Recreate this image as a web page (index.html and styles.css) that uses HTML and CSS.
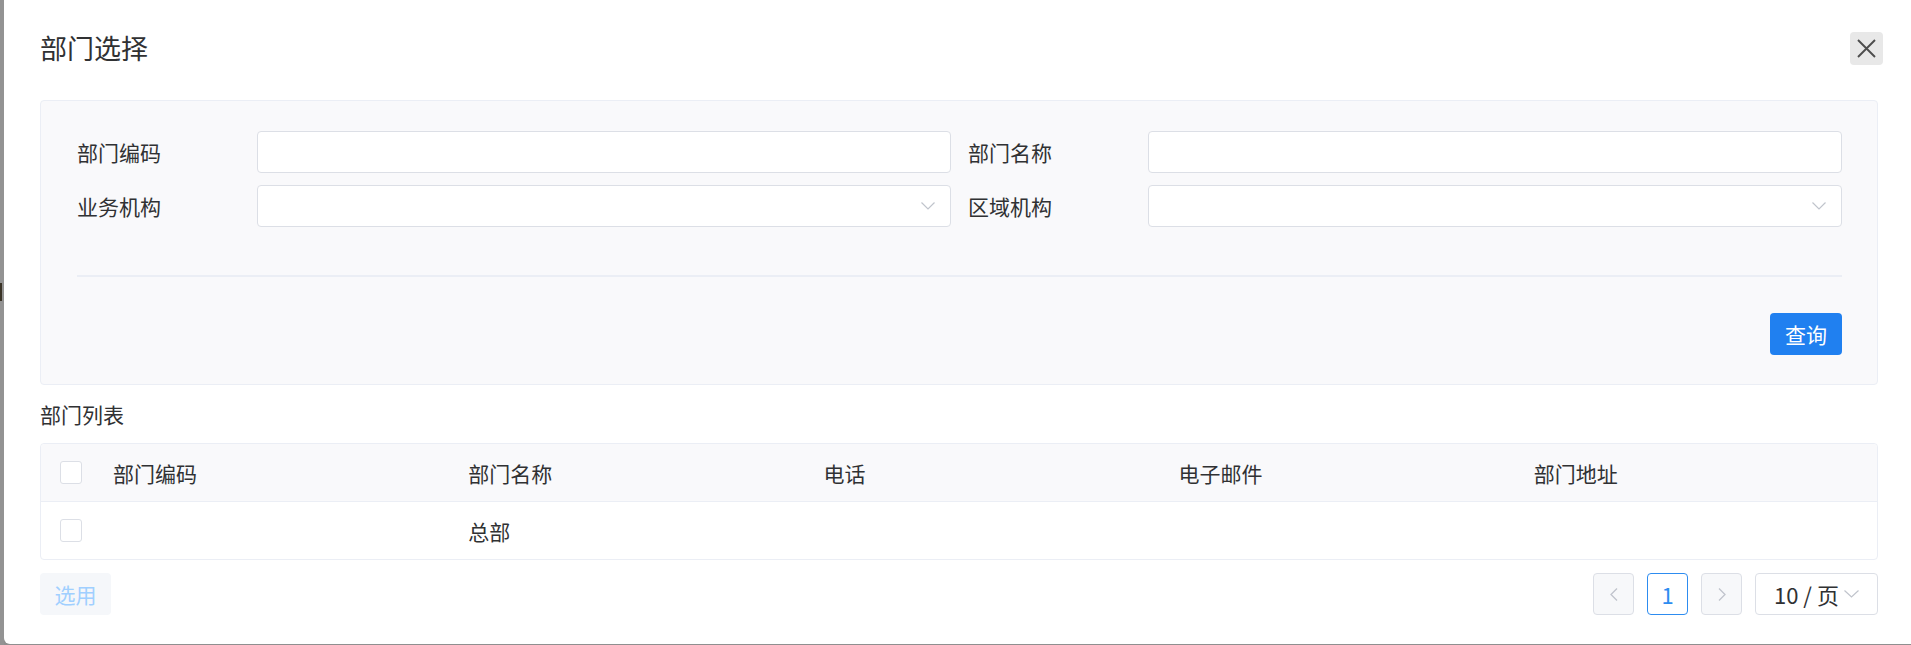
FILE: index.html
```html
<!DOCTYPE html>
<html lang="zh-CN">
<head>
<meta charset="utf-8">
<title>部门选择</title>
<link rel="stylesheet" href="styles.css">
</head>
<body>
<div class="backdrop"><span class="backdrop-mark"></span></div>
<div class="dialog">
  <div class="dialog-header">
    <div class="dialog-title">部门选择</div>
    <button class="close-btn" aria-label="关闭">
      <svg width="19" height="19" viewBox="0 0 19 19"><path d="M1 1L18 18M18 1L1 18" stroke="#4d4d4d" stroke-width="1.9" fill="none"/></svg>
    </button>
  </div>
  <div class="dialog-body">
    <div class="search-panel">
      <div class="form-grid">
        <div class="form-item"><label class="form-label">部门编码</label><div class="input"></div></div>
        <div class="form-item"><label class="form-label">部门名称</label><div class="input"></div></div>
        <div class="form-item"><label class="form-label">业务机构</label><div class="input select"><svg class="chev" width="14" height="8" viewBox="0 0 14 8"><path d="M0.5 0.5L7 7L13.5 0.5" stroke="#c0c4cc" stroke-width="1.2" fill="none"/></svg></div></div>
        <div class="form-item"><label class="form-label">区域机构</label><div class="input select"><svg class="chev" width="14" height="8" viewBox="0 0 14 8"><path d="M0.5 0.5L7 7L13.5 0.5" stroke="#c0c4cc" stroke-width="1.2" fill="none"/></svg></div></div>
      </div>
      <div class="divider"></div>
      <div class="panel-actions"><button class="btn-primary">查询</button></div>
    </div>
    <div class="section-title">部门列表</div>
    <div class="table">
      <div class="tr thead">
        <div class="td check-cell"><span class="checkbox"></span></div>
        <div class="td">部门编码</div>
        <div class="td">部门名称</div>
        <div class="td">电话</div>
        <div class="td">电子邮件</div>
        <div class="td">部门地址</div>
      </div>
      <div class="tr">
        <div class="td check-cell"><span class="checkbox"></span></div>
        <div class="td"></div>
        <div class="td">总部</div>
        <div class="td"></div>
        <div class="td"></div>
        <div class="td"></div>
      </div>
    </div>
    <div class="footer">
      <button class="btn-disabled">选用</button>
      <div class="pager">
        <button class="pg-btn pg-nav"><svg width="8" height="13" viewBox="0 0 8 13"><path d="M7 0.5L1 6.5L7 12.5" stroke="#c0c4cc" stroke-width="1.3" fill="none"/></svg></button>
        <button class="pg-btn pg-active">1</button>
        <button class="pg-btn pg-nav"><svg width="8" height="13" viewBox="0 0 8 13"><path d="M1 0.5L7 6.5L1 12.5" stroke="#c0c4cc" stroke-width="1.3" fill="none"/></svg></button>
        <div class="pg-size"><span>10 / 页</span><svg width="15" height="8" viewBox="0 0 15 8"><path d="M0.5 0.5L7.5 7L14.5 0.5" stroke="#c0c4cc" stroke-width="1.2" fill="none"/></svg></div>
      </div>
    </div>
  </div>
</div>
</body>
</html>
```

FILE: styles.css
```css
* { box-sizing: border-box; }
html, body { margin: 0; padding: 0; }
body {
  display: flex;
  width: 1911px;
  height: 645px;
  overflow: hidden;
  background: #8f8f8f;
  font-family: "Noto Sans CJK SC", "Noto Sans", sans-serif;
  color: #303133;
}
button { font-family: inherit; }
.backdrop {
  width: 4px;
  flex: none;
  background: #939393;
  padding-top: 283px;
}
.backdrop-mark {
  display: block;
  width: 2px;
  height: 18px;
  background: #3a3326;
}
.dialog {
  flex: 1;
  height: 644px;
  background: #fff;
  border-bottom-left-radius: 6px;
}
.dialog-header {
  height: 100px;
  display: flex;
  justify-content: space-between;
  align-items: flex-start;
  padding: 31px 28px 0 36px;
}
.dialog-title {
  font-size: 27px;
  line-height: 33px;
  color: #303133;
}
.close-btn {
  width: 33px;
  height: 33px;
  margin-top: 1px;
  border: none;
  border-radius: 4px;
  background: #e8e8e8;
  padding: 0;
  display: flex;
  align-items: center;
  justify-content: center;
}
.dialog-body {
  padding: 0 33px 0 36px;
}
.search-panel {
  height: 285px;
  background: #f9f9fb;
  border: 1px solid #ebeef5;
  border-radius: 4px;
  padding: 30px 35px 0 36px;
}
.form-grid {
  display: grid;
  grid-template-columns: 1fr 1fr;
  column-gap: 17px;
  row-gap: 12px;
}
.form-item {
  display: flex;
  align-items: center;
}
.form-label {
  width: 180px;
  flex: none;
  font-size: 21px;
  color: #303133;
}
.input {
  flex: 1;
  height: 42px;
  background: #fff;
  border: 1px solid #dcdfe6;
  border-radius: 4px;
}
.select {
  display: flex;
  align-items: center;
  justify-content: flex-end;
  padding-right: 15px;
}
.divider {
  height: 2px;
  background: #ebeef5;
  margin-top: 48px;
}
.panel-actions {
  display: flex;
  justify-content: flex-end;
  margin-top: 36px;
}
.btn-primary {
  width: 72px;
  height: 42px;
  border: none;
  border-radius: 4px;
  background: #2080f0;
  color: #fff;
  font-size: 21px;
  padding: 0;
}
.section-title {
  height: 58px;
  display: flex;
  align-items: center;
  padding-bottom: 1px;
  font-size: 21px;
  color: #303133;
}
.table {
  border: 1px solid #ebeef5;
  border-radius: 4px;
}
.tr {
  display: grid;
  grid-template-columns: 60px repeat(5, 1fr);
  height: 58px;
  align-items: center;
  font-size: 21px;
  color: #303133;
}
.thead {
  background: #f9f9fb;
  border-bottom: 1px solid #ebeef5;
  border-radius: 4px 4px 0 0;
}
.tr + .tr { height: 57px; }
.td {
  padding-left: 12px;
}
.check-cell {
  padding-left: 0;
  display: flex;
  justify-content: center;
}
.checkbox {
  display: block;
  width: 22px;
  height: 23px;
  background: #fff;
  border: 1px solid #dcdfe6;
  border-radius: 3px;
}
.footer {
  display: flex;
  justify-content: space-between;
  align-items: center;
  margin-top: 13px;
}
.btn-disabled {
  width: 71px;
  height: 42px;
  border: none;
  border-radius: 4px;
  background: #f5f7fa;
  color: #a0cfff;
  font-size: 21px;
  padding: 0;
}
.pager {
  display: flex;
  align-items: center;
  gap: 13px;
}
.pg-btn {
  width: 41px;
  height: 42px;
  border-radius: 4px;
  border: 1px solid #dcdfe6;
  background: #fff;
  padding: 0;
  display: flex;
  align-items: center;
  justify-content: center;
  font-size: 22px;
}
.pg-nav { background: #f7f8fa; }
.pg-active {
  border-color: #2d8cf0;
  color: #2d8cf0;
}
.pg-size {
  width: 123px;
  height: 42px;
  border: 1px solid #dcdfe6;
  border-radius: 4px;
  display: flex;
  align-items: center;
  padding-left: 18px;
  gap: 5px;
  font-size: 22px;
  color: #303133;
}
```
